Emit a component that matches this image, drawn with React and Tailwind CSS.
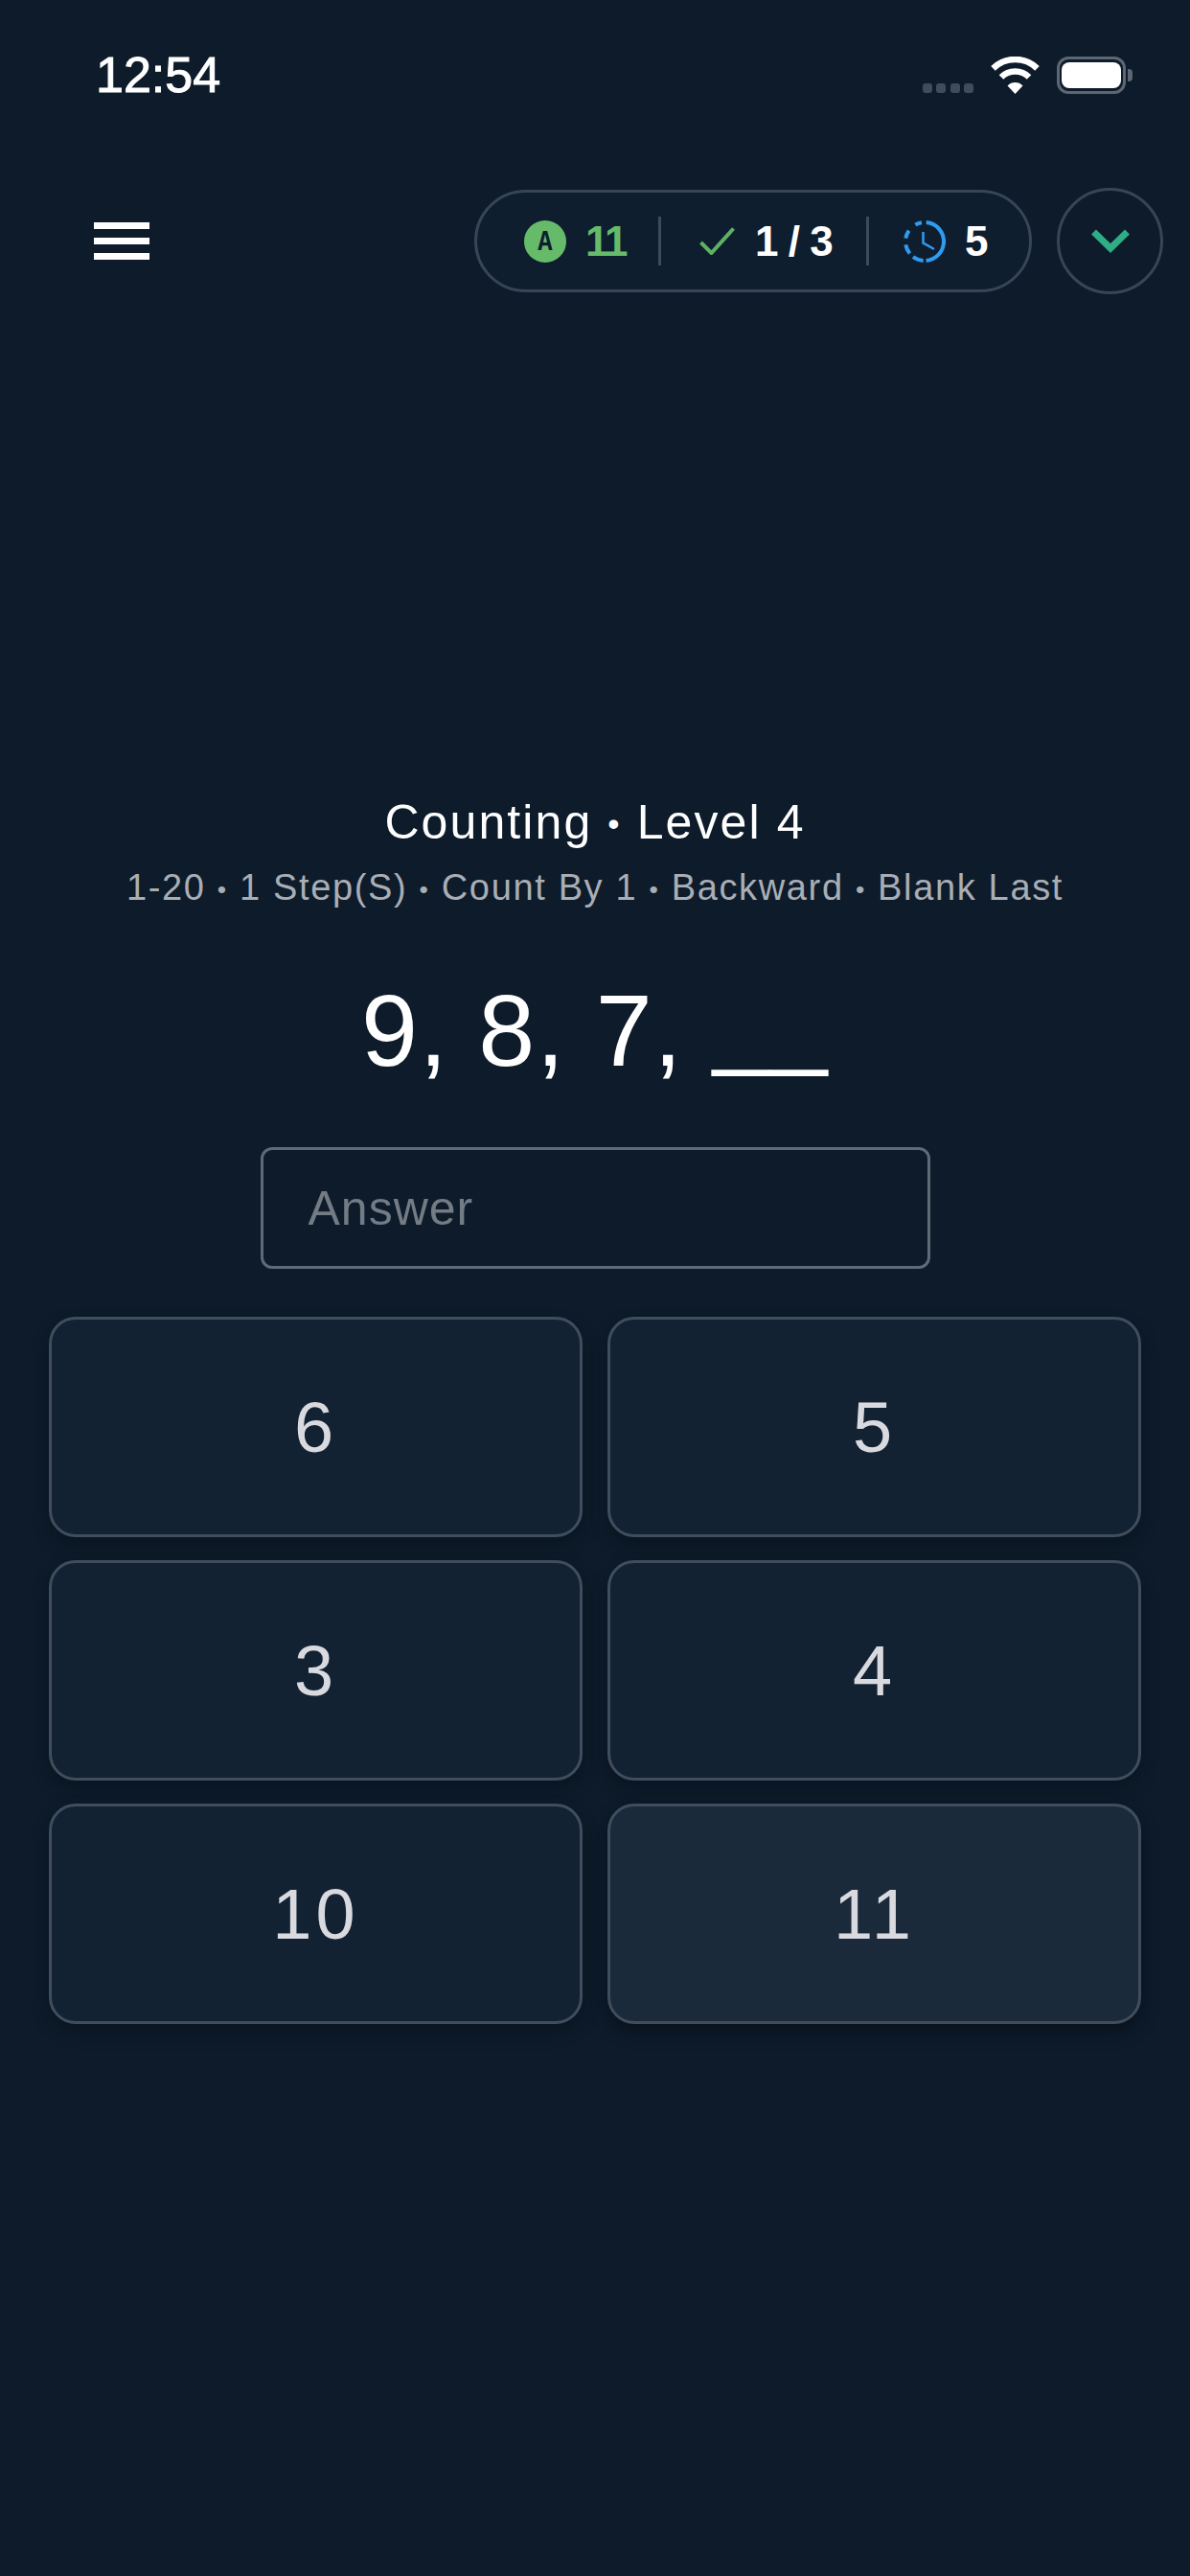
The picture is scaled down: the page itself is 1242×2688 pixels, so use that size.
import React from 'react';

const FONT = "font-['Liberation_Sans',Arial,sans-serif]";

const Dot = () => <span className="text-[0.7em] align-[0.08em]">•</span>;

const StatusIcons = () => (
  <div className="flex items-center">
    <div className="flex gap-[4.5px] self-end mb-[1px]">
      {[0, 1, 2, 3].map((i) => (
        <span key={i} className="w-[10px] h-[10px] rounded-[3px] bg-[#414c5a]" />
      ))}
    </div>
    <svg className="ml-[18px]" width="51" height="39" viewBox="0 0 51 39" fill="none">
      <path d="M2.5 12.3A33 33 0 0 1 48.5 12.3" stroke="white" strokeWidth="6.5" />
      <path d="M11 21.5A20.5 20.5 0 0 1 40 21.5" stroke="white" strokeWidth="6.5" />
      <path d="M25.5 39L17.5 30.5A11 11 0 0 1 33.5 30.5Z" fill="white" />
    </svg>
    <div className="ml-[18px] flex items-center">
      <div className="w-[72px] h-[39px] rounded-[12px] border-[3px] border-[#5d6673] px-[2px] py-[3px]">
        <div className="w-full h-full rounded-[8px] bg-white" />
      </div>
      <div className="ml-[2px] w-[5px] h-[13px] rounded-r-[4px] bg-[#5d6673]" />
    </div>
  </div>
);

const ClockIcon = () => (
  <svg width="44" height="44" viewBox="0 0 44 44" fill="none">
    <circle
      cx="22"
      cy="22"
      r="20"
      stroke="#2f9cf0"
      strokeWidth="4"
      pathLength="360"
      strokeDasharray="170 9 33 14 29 20 25 26 20 14"
      transform="rotate(-85 22 22)"
    />
    <path d="M20.5 12V23.5L32 30" stroke="#2f9cf0" strokeWidth="2.5" />
  </svg>
);

const Divider = () => <span className="w-[3px] h-[51px] bg-[#3d4a5a]" />;

const TopBar = () => (
  <div className="mt-[93px] h-[111px] flex items-center pl-[98px] pr-[28px]">
    <div className="w-[58px] flex flex-col gap-[9px]">
      <span className="h-[7px] bg-white" />
      <span className="h-[7px] bg-white" />
      <span className="h-[7px] bg-white" />
    </div>
    <div className="ml-auto w-[582px] h-[107px] flex items-center rounded-full border-[3px] border-[#374554] bg-[#0f1e2f] pl-[49px]">
      <span className="w-[44px] h-[44px] pt-[2px] rounded-full bg-[#66bb6a] flex items-center justify-center text-[30px] leading-none font-bold text-[#0f1e2f] font-['Liberation_Mono',monospace]">
        <span className="scale-x-85">A</span>
      </span>
      <span className="ml-[20px] w-[76px] text-[44px] font-bold tracking-[-2px] text-[#66bb6a] leading-none">11</span>
      <Divider />
      <svg className="ml-[40px]" width="37" height="29" viewBox="0 0 37 29" fill="none">
        <path d="M1.5 16L12.5 27L35.5 1.5" stroke="#5cb262" strokeWidth="4" />
      </svg>
      <span className="ml-[21px] w-[116px] text-[44px] font-bold tracking-[-1px] text-white leading-none">1 / 3</span>
      <Divider />
      <span className="ml-[36px]"><ClockIcon /></span>
      <span className="ml-[20px] text-[44px] font-bold text-white leading-none">5</span>
    </div>
    <div className="ml-[26px] w-[111px] h-[111px] rounded-full border-[3px] border-[#374554] flex items-center justify-center">
      <svg width="40" height="25" viewBox="0 0 40 25" fill="none">
        <path d="M2.5 3L20 20L37.5 3" stroke="#2fae85" strokeWidth="7" />
      </svg>
    </div>
  </div>
);

const ChoiceButton = ({ label, active }) => (
  <button
    className={
      active
        ? 'rounded-[28px] border-[3px] border-[#404d5d] bg-[#1b2a3b] text-[74px] tracking-[4px] text-[#d9dadf] shadow-[0_8px_18px_rgba(0,0,0,0.35)]'
        : 'rounded-[28px] border-[3px] border-[#404d5d] bg-[#122232] text-[74px] tracking-[4px] text-[#d9dadf] shadow-[0_8px_18px_rgba(0,0,0,0.25)]'
    }
  >
    {label}
  </button>
);

const App = () => {
  const choices = ['6', '5', '3', '4', '10', '11'];

  return (
    <div className={`${FONT} w-[1242px] h-[2688px] bg-[#0d1b2a] flex flex-col overflow-hidden`}>
      <div className="pt-[53px] h-[103px] pl-[100px] pr-[60px] flex items-center justify-between">
        <span className="text-[52px] leading-[50px] text-white [-webkit-text-stroke:1px_white]">12:54</span>
        <StatusIcons />
      </div>

      <TopBar />

      <div className="mt-[521px] flex flex-col items-center">
        <h1 className="text-[50px] leading-[60px] tracking-[2.1px] text-white">Counting <Dot /> Level 4</h1>
        <p className="mt-[13px] text-[38px] leading-[46px] tracking-[1.65px] text-[#a9aeb5]">
          1-20 <Dot /> 1 Step(S) <Dot /> Count By 1 <Dot /> Backward <Dot /> Blank Last
        </p>
        <div className="mt-[64px] text-[106px] leading-[120px] tracking-[1.5px] text-white">
          9, 8, 7, <span className="relative -top-[10px]">__</span>
        </div>
        <input
          placeholder="Answer"
          className="mt-[62px] w-[699px] h-[127px] rounded-[12px] border-[3px] border-[#5f6a76] bg-transparent pl-[47px] text-[50px] tracking-[1px] text-white placeholder:text-[#737b85] outline-none"
        />
      </div>

      <div className="mt-[50px] ml-[51px] w-[1140px] grid grid-cols-2 gap-x-[26px] gap-y-[24px] auto-rows-[230px]">
        {choices.map((c) => (
          <ChoiceButton key={c} label={c} active={c === '11'} />
        ))}
      </div>
    </div>
  );
};

export default App;
